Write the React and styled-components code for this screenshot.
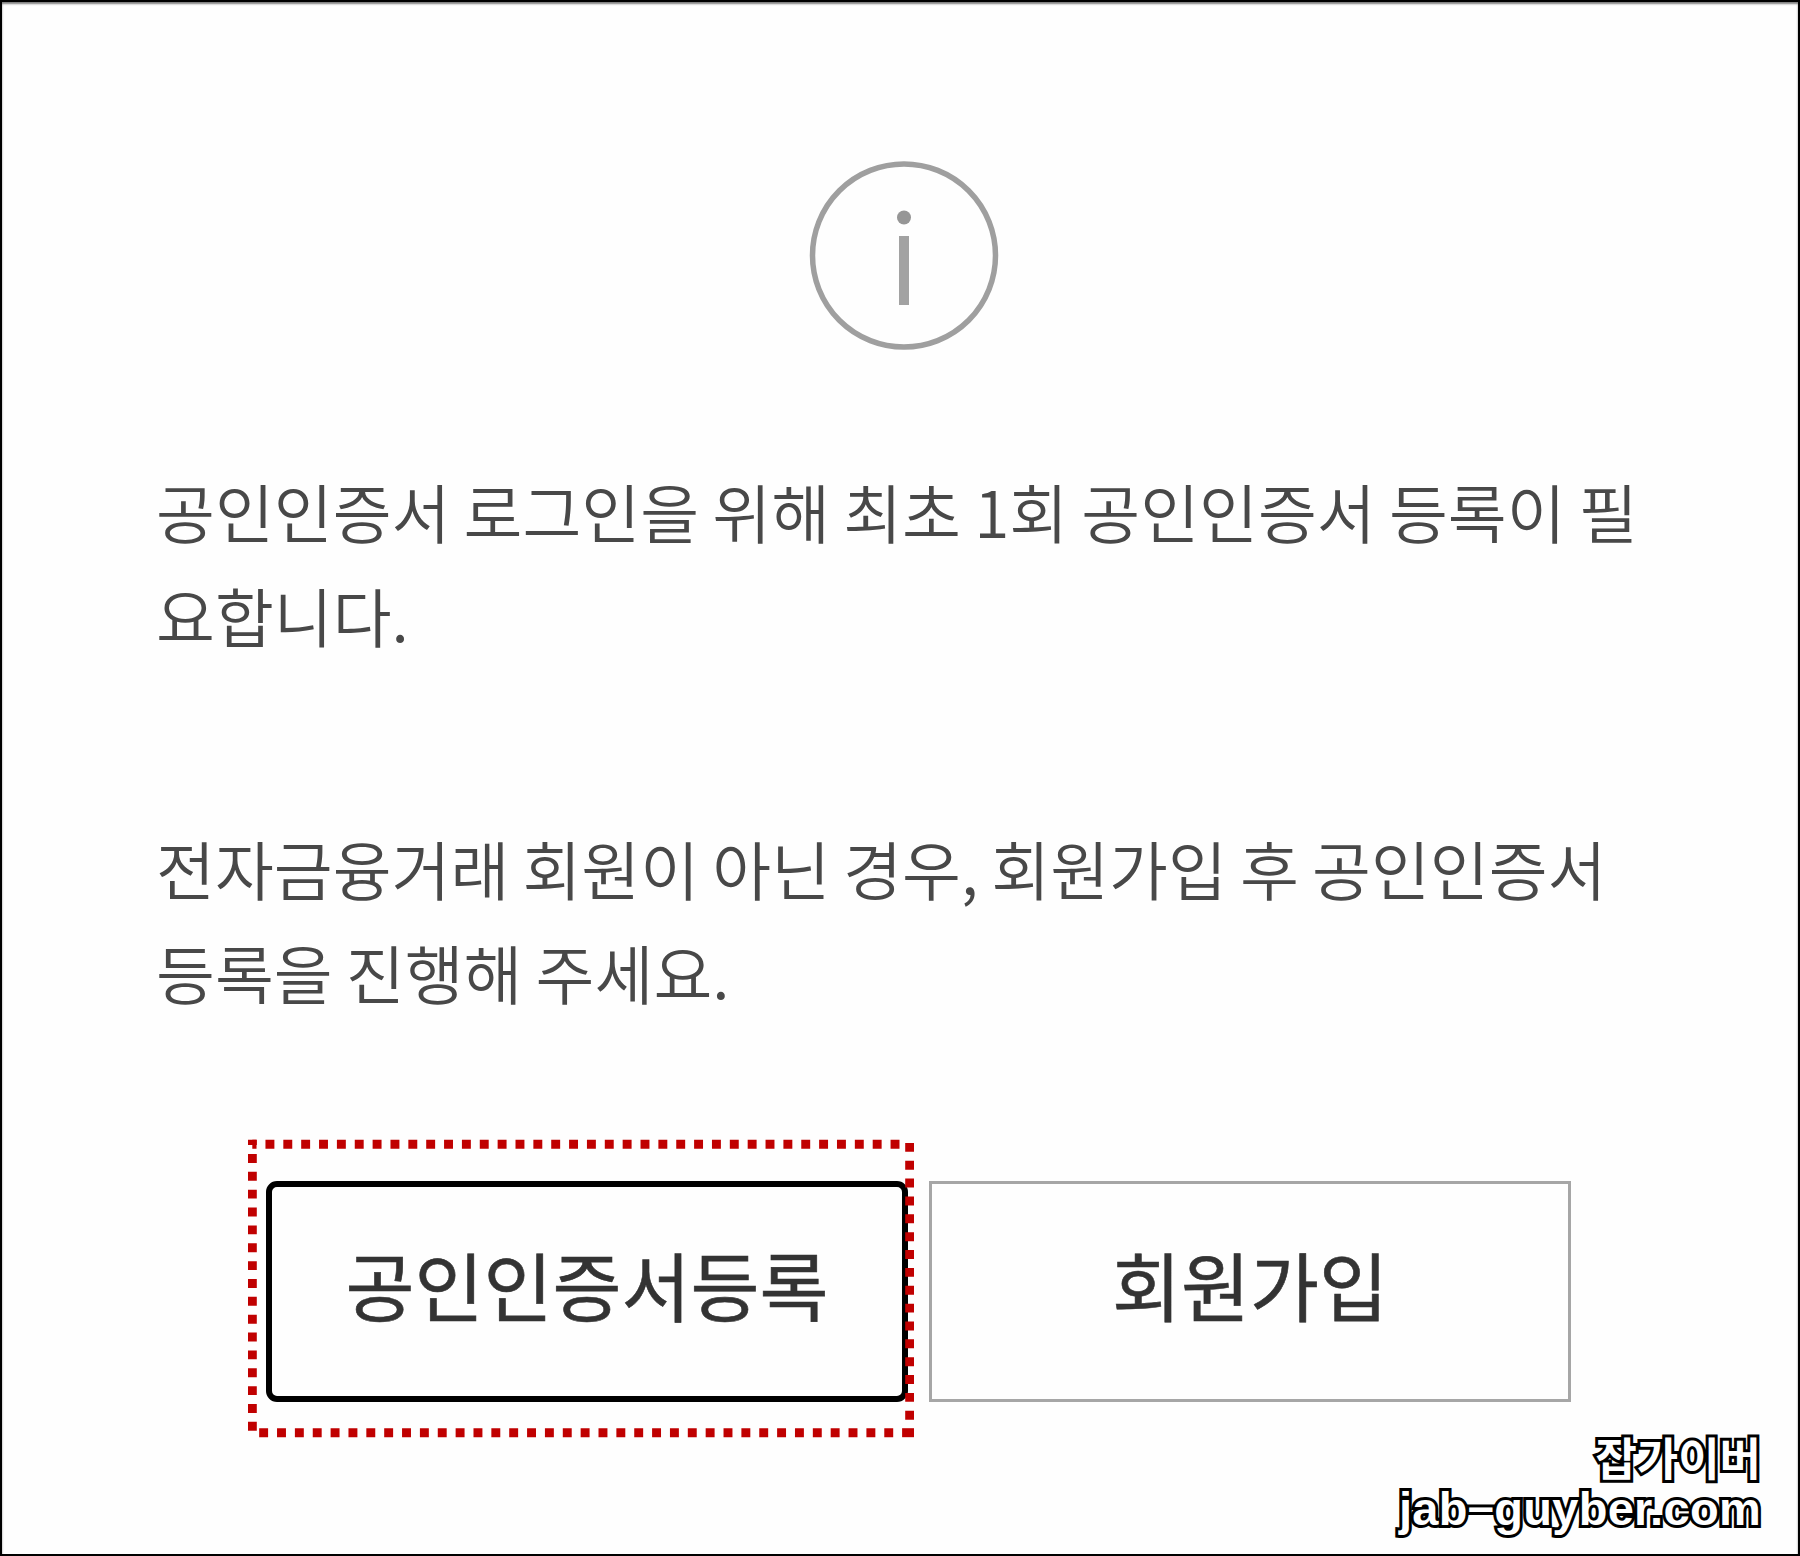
import styled, { createGlobalStyle } from "styled-components";

const GlobalStyle = createGlobalStyle`
  * {
    box-sizing: border-box;
  }
  body {
    margin: 0;
    background: #fefefe;
    font-family: "Noto Sans CJK KR", sans-serif;
  }
`;

const Frame = styled.div`
  position: relative;
  width: 1800px;
  height: 1556px;
  padding-top: 158px;
  overflow: hidden;
  border: 2px solid #000;
  background: #fefefe;
  box-shadow: inset 0 2px 2px rgba(0, 0, 0, 0.5);
`;

const InfoIcon = styled.svg`
  display: block;
  width: 192px;
  height: 192px;
  margin-left: 806px;
`;

const Message = styled.div`
  padding-left: 154px;
  margin-top: 106px;
`;

const Paragraph = styled.p`
  margin: 0 0 149px;
  color: #484848;
  font-size: 64px;
  font-weight: 350;
  line-height: 104px;
  word-spacing: -1.1px;
  white-space: nowrap;
`;

const Line = styled.span`
  display: block;
`;

const ButtonRow = styled.div`
  display: flex;
  gap: 21px;
  padding: 9px 0 0 264px;
`;

const Button = styled.button`
  width: 642px;
  height: 221px;
  padding: 0 0 17px;
  border: ${(props) => (props.$focused ? "6px solid #000" : "3px solid #a6a6a6")};
  border-radius: ${(props) => (props.$focused ? "11px" : "0")};
  background: transparent;
  color: #333;
  font-family: inherit;
  font-size: 75px;
  font-weight: 400;
  line-height: 1;
  -webkit-text-stroke: 0.6px #333;
`;

// red dotted marker over the first button
const Marker = styled.svg`
  position: absolute;
  left: 246px;
  top: 1137px;
  width: 666px;
  height: 300px;
  fill: none;
  stroke: #c00000;
  stroke-width: 9;
  stroke-dasharray: 8.93 8.93;
`;

const Watermark = styled.div`
  position: absolute;
  right: 37px;
  bottom: 19px;
  color: #fff;
  font-family: "Liberation Sans", "Noto Sans CJK KR", sans-serif;
  font-weight: 700;
  text-align: right;
  white-space: nowrap;
  -webkit-text-stroke: 6px #000;
  stroke-linejoin: round;
  paint-order: stroke fill;
`;

const WatermarkName = styled.div`
  margin-bottom: -4px;
  font-size: 45px;
  line-height: 52px;
`;

const WatermarkSite = styled.div`
  font-size: 47px;
  line-height: 52px;
  letter-spacing: 0.3px;
`;

const Dash = styled.span`
  line-height: 0;
  vertical-align: 3px;
`;

const App = () => {
  return (
    <>
      <GlobalStyle />
      <Frame>
        <InfoIcon viewBox="0 0 192 192">
          <circle
            cx="96"
            cy="95.5"
            r="91.5"
            fill="none"
            stroke="#9f9f9f"
            strokeWidth="5.5"
          />
          <circle cx="96" cy="57.5" r="7" fill="#969696" />
          <rect x="91" y="76" width="10" height="69" fill="#a2a2a2" />
        </InfoIcon>

        <Message>
          <Paragraph>
            <Line>공인인증서 로그인을 위해 최초 1회 공인인증서 등록이 필</Line>
            <Line>요합니다.</Line>
          </Paragraph>
          <Paragraph>
            <Line>전자금융거래 회원이 아닌 경우, 회원가입 후 공인인증서</Line>
            <Line>등록을 진행해 주세요.</Line>
          </Paragraph>
        </Message>

        <ButtonRow>
          <Button $focused>공인인증서등록</Button>
          <Button>회원가입</Button>
        </ButtonRow>

        <Marker viewBox="248 1139 666 300">
          <path d="M252.3 1144.3H905" strokeDashoffset="4.7" />
          <path d="M909.7 1142.9V1428" />
          <path d="M914.2 1432.7H902.1" strokeDasharray="none" />
          <path d="M893.2 1432.7H256" />
          <path d="M252.3 1430.8V1139.8" />
        </Marker>

        <Watermark>
          <WatermarkName>잡가이버</WatermarkName>
          <WatermarkSite>
            jab<Dash>–</Dash>guyber.com
          </WatermarkSite>
        </Watermark>
      </Frame>
    </>
  );
};

export default App;
